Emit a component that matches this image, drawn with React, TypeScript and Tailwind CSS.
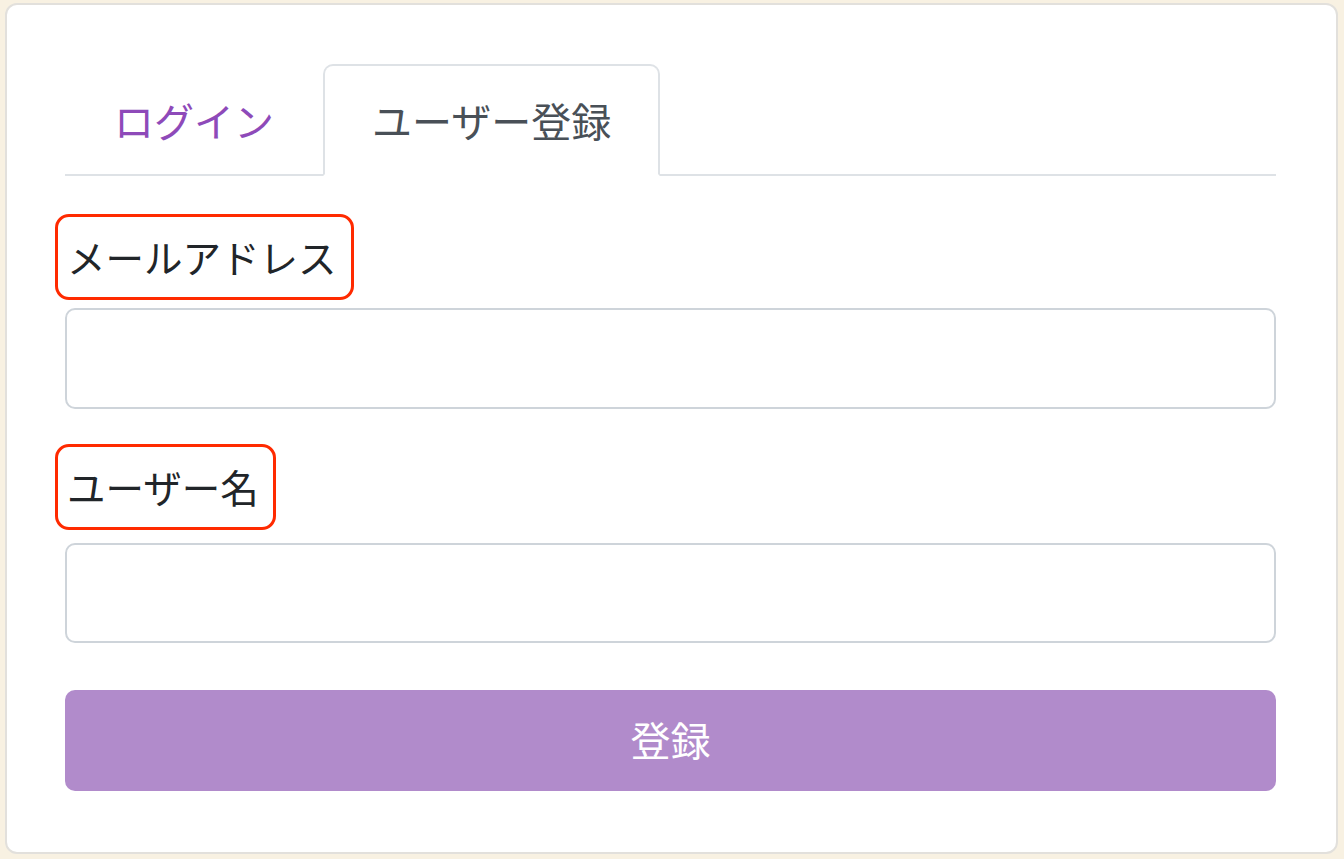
import React from 'react';

const font = { fontFamily: '"Noto Sans CJK JP", "Noto Sans", sans-serif' };

const FieldLabel: React.FC<{ text: string; className?: string }> = ({ text, className }) => (
  <div className={className}>
    <label className="-ml-[10px] inline-block h-[86px] rounded-[14px] border-[3.5px] border-[#ff2a00] py-[10px] pr-[14px] pl-[9px] text-[38.5px] leading-[59px] text-[#212529]">
      {text}
    </label>
  </div>
);

const App: React.FC = () => {
  return (
    <div className="min-h-screen bg-[#f8f1e2] pt-[3px] pr-[6px] pb-[5px] pl-[5px]" style={font}>
      <div className="h-[851px] rounded-[12px] border-2 border-[#e2e0dc] bg-white pt-[59px] pr-[60px] pl-[58px]">
        <div className="flex border-b-2 border-[#dee2e6]">
          <button className="-mb-[2px] border-2 border-transparent px-[47px] py-[24px] text-[40px] leading-[60px] text-[#8e4ab9]">
            ログイン
          </button>
          <button className="-mb-[2px] rounded-t-[10px] border-2 border-[#dee2e6] border-b-white bg-white px-[47px] py-[24px] text-[40px] leading-[60px] text-[#495057]">
            ユーザー登録
          </button>
        </div>

        <form>
          <FieldLabel text="メールアドレス" className="mt-[38px]" />
          <input
            type="email"
            className="mt-[8px] block h-[101px] w-full rounded-[10px] border-2 border-[#ced4da] bg-white px-4 text-[40px] outline-none"
          />

          <FieldLabel text="ユーザー名" className="mt-[35px]" />
          <input
            type="text"
            className="mt-[13px] block h-[100px] w-full rounded-[10px] border-2 border-[#ced4da] bg-white px-4 text-[40px] outline-none"
          />

          <button
            type="button"
            className="mt-[47px] flex h-[101px] w-full items-center justify-center rounded-[10px] bg-[#b18bcb] pb-[4px] text-[40px] leading-none text-white"
          >
            登録
          </button>
        </form>
      </div>
    </div>
  );
};

export default App;
